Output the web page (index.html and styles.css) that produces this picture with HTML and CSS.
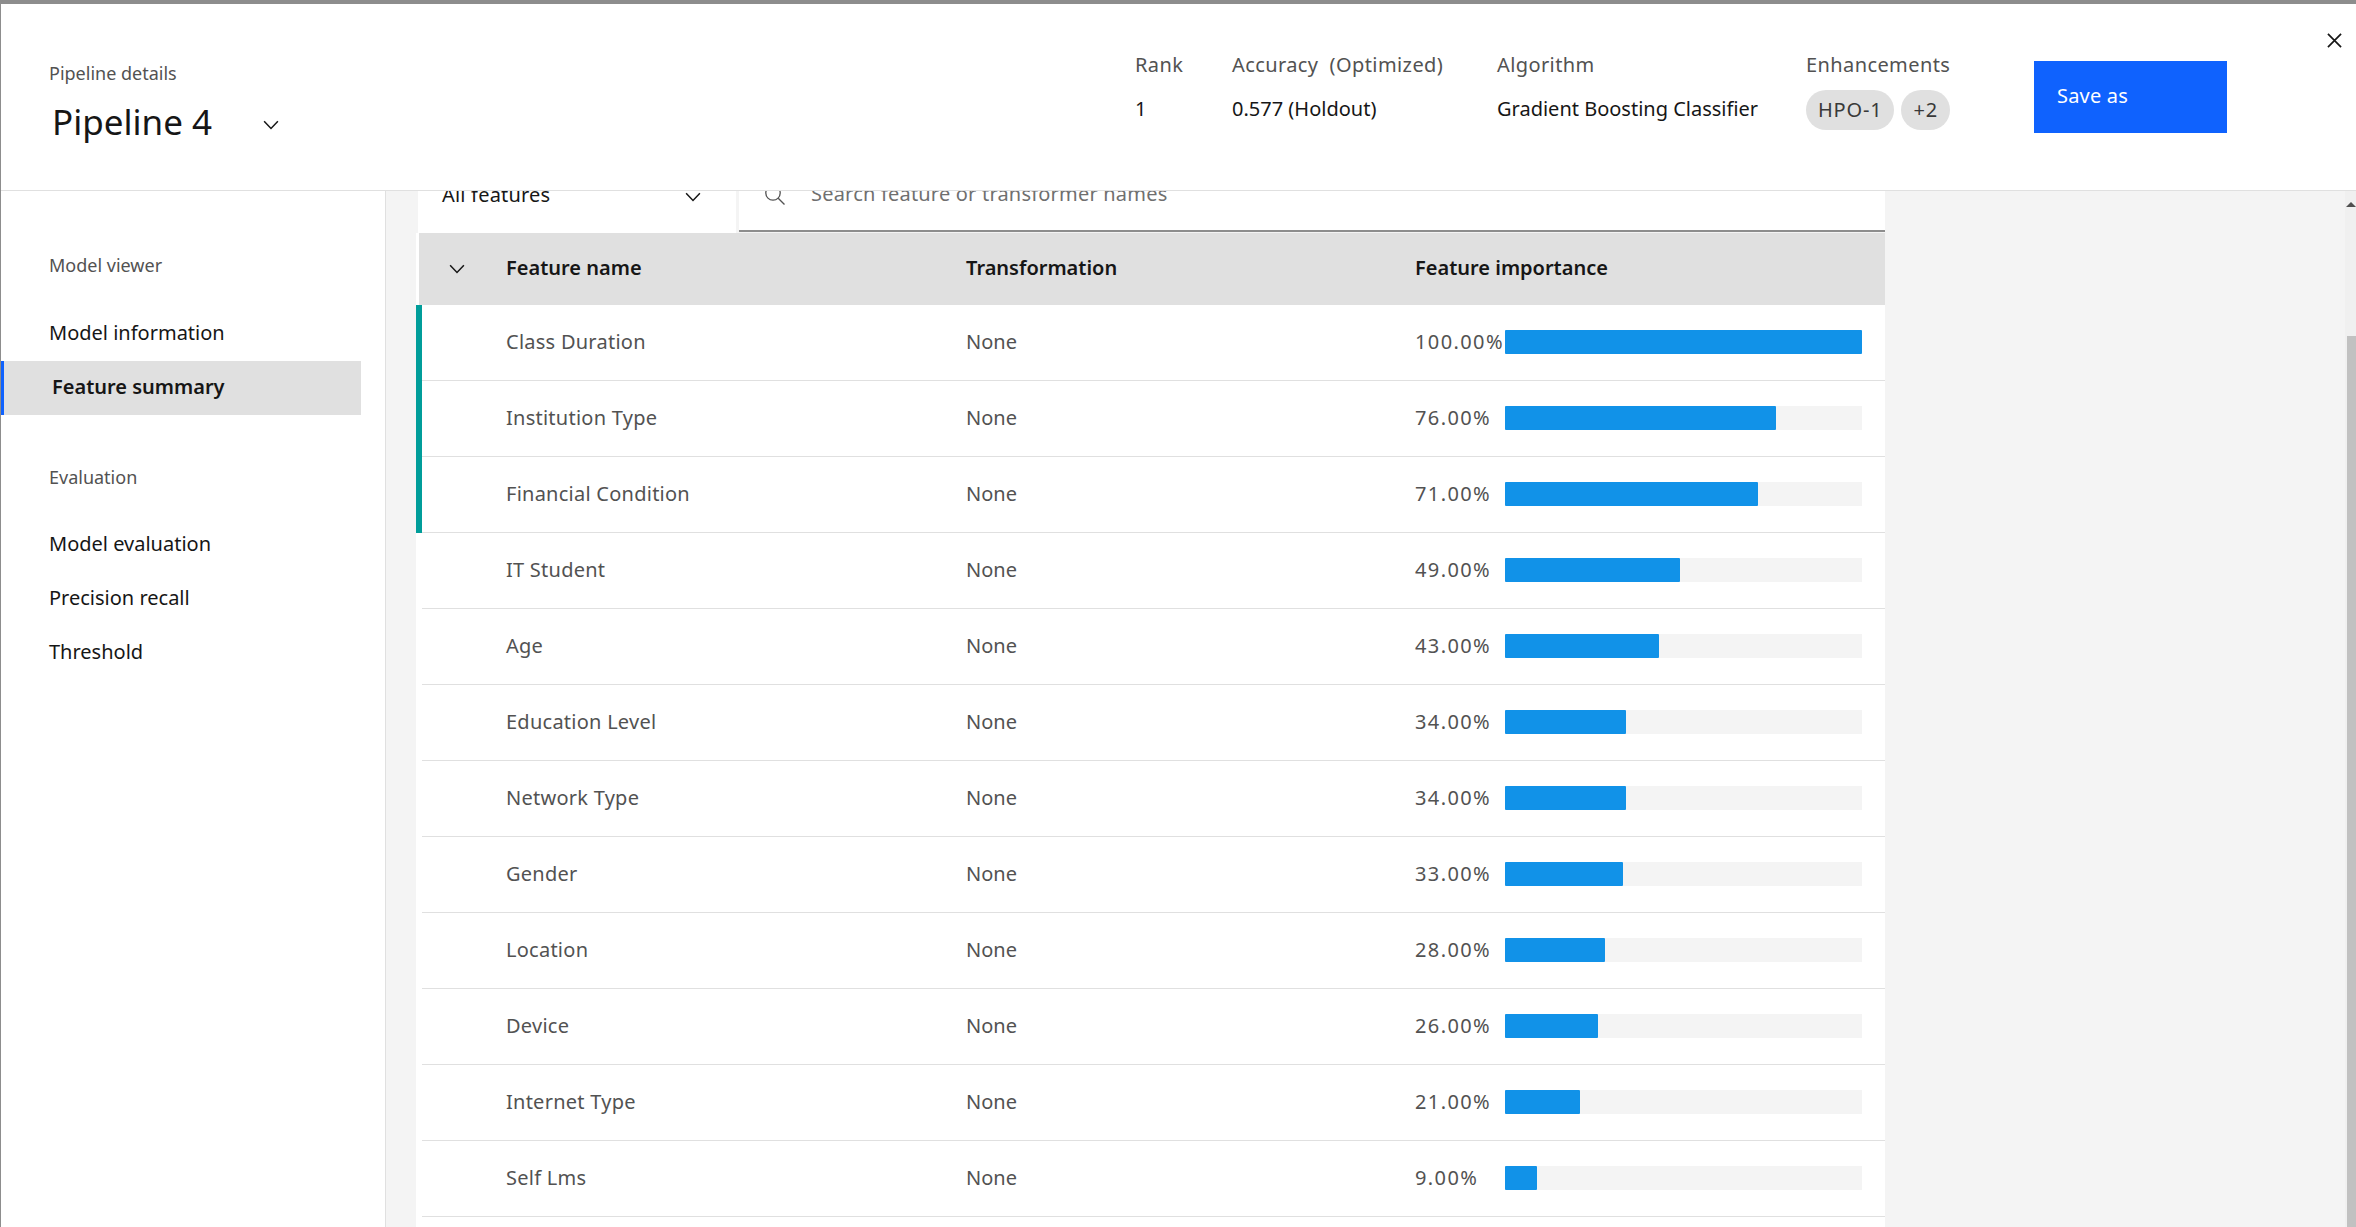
FILE: index.html
```html
<!DOCTYPE html>
<html lang="en">
    <head>
        <meta charset="UTF-8">
        <meta name="viewport" content="width=device-width, initial-scale=1.0">
        <title>Pipeline details</title>
        <link rel="stylesheet" href="styles.css">
    </head>
    <body>
        <header class="top">
            <div class="title-block">
                <div class="small-label">Pipeline details</div>
                <div class="title-row">
                    <h1>Pipeline 4</h1>
                    <svg class="chev" viewBox="0 0 16 16"><path d="M2.5 5 8 10.8 13.5 5"/></svg>
                </div>
            </div>
            <div class="meta">
                <div class="meta-col rank"><span class="meta-label">Rank</span><span class="meta-value">1</span></div>
                <div class="meta-col accuracy"><span class="meta-label">Accuracy&nbsp; (Optimized)</span><span class="meta-value">0.577 (Holdout)</span></div>
                <div class="meta-col algorithm"><span class="meta-label">Algorithm</span><span class="meta-value">Gradient Boosting Classifier</span></div>
                <div class="meta-col enhancements">
                    <span class="meta-label">Enhancements</span>
                    <span class="tags"><span class="tag">HPO-1</span><span class="tag">+2</span></span>
                </div>
            </div>
            <button class="save-btn">Save as</button>
            <svg class="close" viewBox="0 0 16 16"><path d="M1 1 15 15M15 1 1 15"/></svg>
        </header>
        <div class="layout">
            <nav class="side">
                <div class="small-label side-head">Model viewer</div>
                <a class="side-item">Model information</a>
                <a class="side-item active">Feature summary</a>
                <div class="small-label side-head second">Evaluation</div>
                <a class="side-item">Model evaluation</a>
                <a class="side-item">Precision recall</a>
                <a class="side-item">Threshold</a>
            </nav>
            <main class="content">
                <div class="panel">
                    <div class="toolbar">
                        <div class="filter">
                            <span>All features</span>
                            <svg class="chev" viewBox="0 0 16 16"><path d="M2.5 5 8 10.8 13.5 5"/></svg>
                        </div>
                        <div class="search">
                            <svg class="search-icon" viewBox="0 0 22 22"><circle cx="9" cy="9" r="7.2"/><path d="M14.2 14.2 20.5 20.5"/></svg>
                            <span>Search feature or transformer names</span>
                        </div>
                    </div>
                    <div class="head-row">
                        <svg class="chev" viewBox="0 0 16 16"><path d="M2.5 5 8 10.8 13.5 5"/></svg>
                        <span>Feature name</span>
                        <span>Transformation</span>
                        <span>Feature importance</span>
                    </div>
                    <div class="row top-feature"><div class="cells"><span></span><span class="name">Class Duration</span><span>None</span><div class="imp"><span class="pct">100.00%</span><div class="track"><div class="fill" style="width: 100%"></div></div></div></div></div>
                    <div class="row top-feature"><div class="cells"><span></span><span class="name">Institution Type</span><span>None</span><div class="imp"><span class="pct">76.00%</span><div class="track"><div class="fill" style="width: 76%"></div></div></div></div></div>
                    <div class="row top-feature"><div class="cells"><span></span><span class="name">Financial Condition</span><span>None</span><div class="imp"><span class="pct">71.00%</span><div class="track"><div class="fill" style="width: 71%"></div></div></div></div></div>
                    <div class="row"><div class="cells"><span></span><span class="name">IT Student</span><span>None</span><div class="imp"><span class="pct">49.00%</span><div class="track"><div class="fill" style="width: 49%"></div></div></div></div></div>
                    <div class="row"><div class="cells"><span></span><span class="name">Age</span><span>None</span><div class="imp"><span class="pct">43.00%</span><div class="track"><div class="fill" style="width: 43%"></div></div></div></div></div>
                    <div class="row"><div class="cells"><span></span><span class="name">Education Level</span><span>None</span><div class="imp"><span class="pct">34.00%</span><div class="track"><div class="fill" style="width: 34%"></div></div></div></div></div>
                    <div class="row"><div class="cells"><span></span><span class="name">Network Type</span><span>None</span><div class="imp"><span class="pct">34.00%</span><div class="track"><div class="fill" style="width: 34%"></div></div></div></div></div>
                    <div class="row"><div class="cells"><span></span><span class="name">Gender</span><span>None</span><div class="imp"><span class="pct">33.00%</span><div class="track"><div class="fill" style="width: 33%"></div></div></div></div></div>
                    <div class="row"><div class="cells"><span></span><span class="name">Location</span><span>None</span><div class="imp"><span class="pct">28.00%</span><div class="track"><div class="fill" style="width: 28%"></div></div></div></div></div>
                    <div class="row"><div class="cells"><span></span><span class="name">Device</span><span>None</span><div class="imp"><span class="pct">26.00%</span><div class="track"><div class="fill" style="width: 26%"></div></div></div></div></div>
                    <div class="row"><div class="cells"><span></span><span class="name">Internet Type</span><span>None</span><div class="imp"><span class="pct">21.00%</span><div class="track"><div class="fill" style="width: 21%"></div></div></div></div></div>
                    <div class="row"><div class="cells"><span></span><span class="name">Self Lms</span><span>None</span><div class="imp"><span class="pct">9.00%</span><div class="track"><div class="fill" style="width: 9%"></div></div></div></div></div>
                </div>
                <div class="scrollbar">
                    <div class="scroll-arrow"></div>
                    <div class="scroll-thumb"></div>
                </div>
            </main>
        </div>
    </body>
</html>
```

FILE: styles.css
```css
* {
    box-sizing: border-box;
}

html, body {
    height: 100%;
}

body {
    margin: 0;
    height: 1227px;
    overflow: hidden;
    display: flex;
    flex-direction: column;
    background: #fff;
    color: #161616;
    font-family: "Noto Sans", sans-serif;
    font-size: 20px;
    border-top: 4px solid #8d8d8d;
    border-left: 1px solid #8d8d8d;
}

svg {
    display: block;
    fill: none;
    stroke: #161616;
    stroke-width: 1.2;
}

.chev {
    width: 20px;
    height: 20px;
    flex: none;
}

/* top header */
.top {
    position: relative;
    z-index: 2;
    flex: none;
    height: 187px;
    display: flex;
    background: #fff;
    border-bottom: 1px solid #e0e0e0;
}

.small-label {
    color: #525252;
    font-size: 18px;
    line-height: 24px;
}

.title-block {
    width: 1134px;
    padding: 57px 0 0 48px;
}

.title-row {
    display: flex;
    align-items: center;
    margin-top: 13px;
    margin-left: 3px;
}

.title-row h1 {
    margin: 0;
    width: 209px;
    font-size: 35px;
    line-height: 48px;
    font-weight: 400;
}

.title-row .chev {
    margin-top: 6px;
}

.meta {
    display: flex;
    padding-top: 47px;
}

.meta-col {
    display: flex;
    flex-direction: column;
}

.meta-label {
    color: #525252;
    line-height: 28px;
    letter-spacing: 0.4px;
    white-space: nowrap;
}

.meta-value {
    margin-top: 16px;
    line-height: 28px;
    white-space: nowrap;
}

.rank {
    width: 97px;
}

.accuracy {
    width: 265px;
}

.algorithm {
    width: 309px;
}

.enhancements {
    width: 228px;
}

.tags {
    display: flex;
    gap: 7px;
    margin-top: 11px;
}

.tag {
    height: 40px;
    line-height: 40px;
    padding: 0 12px;
    border-radius: 20px;
    background: #e0e0e0;
    color: #393939;
    letter-spacing: 0.8px;
}

.save-btn {
    width: 193px;
    height: 72px;
    margin-top: 57px;
    padding: 0 0 3px 23px;
    border: 0;
    background: #0f62fe;
    color: #fff;
    font: inherit;
    letter-spacing: 0.2px;
    text-align: left;
}

/* close button sits in the modal corner */
.close {
    position: absolute;
    top: 29px;
    right: 14px;
    width: 15px;
    height: 15px;
    stroke-width: 1.8;
}

.layout {
    flex: 1;
    display: flex;
    min-height: 0;
}

/* left navigation */
.side {
    flex: none;
    width: 385px;
    padding-top: 62px;
    border-right: 1px solid #e0e0e0;
    background: #fff;
}

.side-head {
    margin-left: 48px;
    margin-bottom: 30px;
}

.side-head.second {
    margin-top: 50px;
    margin-bottom: 29px;
}

.side-item {
    display: block;
    width: 360px;
    height: 54px;
    line-height: 52px;
    padding-left: 48px;
}

.side-item.active {
    padding-left: 48px;
    border-left: 3px solid #0f62fe;
    background: #e0e0e0;
    font-weight: 600;
}

/* main content */
.content {
    flex: 1;
    display: flex;
    overflow: hidden;
    background: #f4f4f4;
    padding-left: 30px;
}

.panel {
    flex: none;
    width: 1469px;
    margin-top: -30px;
    background: #fff;
    color: #525252;
}

.toolbar {
    display: flex;
    height: 72px;
    background: #f4f4f4;
}

.filter {
    width: 318px;
    margin-left: 2px;
    padding: 0 33px 6px 24px;
    display: flex;
    justify-content: space-between;
    align-items: center;
    background: #fff;
    color: #161616;
    letter-spacing: 0.2px;
}

.filter .chev {
    margin-top: 6px;
}

.search {
    flex: 1;
    margin-left: 3px;
    margin-bottom: 1px;
    padding: 0 0 4px 25px;
    display: flex;
    align-items: center;
    gap: 25px;
    background: #fff;
    border-bottom: 2px solid #8d8d8d;
    color: #6f6f6f;
    letter-spacing: 0.2px;
}

.search-icon {
    width: 22px;
    height: 22px;
    margin-top: 2px;
    stroke: #525252;
    stroke-width: 1.3;
}

.head-row {
    height: 72px;
    margin-left: 3px;
    padding: 0 0 4px 28px;
    display: grid;
    grid-template-columns: 59px 460px 449px auto;
    align-items: center;
    background: #e0e0e0;
    color: #161616;
    font-weight: 600;
}

.head-row .chev {
    margin-top: 4px;
}

.row {
    height: 76px;
    border-left: 6px solid #fff;
}

.row.top-feature {
    border-left-color: #009d9a;
}

.cells {
    height: 100%;
    padding: 0 23px 2px 0;
    display: grid;
    grid-template-columns: 84px 460px 449px 1fr;
    align-items: center;
    border-bottom: 1px solid #e0e0e0;
}

.name {
    letter-spacing: 0.25px;
}

.imp {
    display: flex;
    align-items: center;
}

.pct {
    flex: none;
    width: 90px;
    letter-spacing: 1.4px;
    white-space: nowrap;
}

.track {
    flex: 1;
    height: 24px;
    background: #f4f4f4;
}

.fill {
    height: 100%;
    background: #1192e8;
    border-radius: 1px;
}

/* window scrollbar */
.scrollbar {
    position: relative;
    width: 11px;
    margin-left: auto;
    background: #f0f0f0;
}

.scroll-arrow {
    position: absolute;
    top: 11px;
    right: 0;
    width: 0;
    height: 0;
    border-left: 5px solid transparent;
    border-right: 5px solid transparent;
    border-bottom: 5px solid #505050;
}

.scroll-thumb {
    margin: 145px 0 0 2px;
    height: 900px;
    background: #c1c1c1;
}
```
